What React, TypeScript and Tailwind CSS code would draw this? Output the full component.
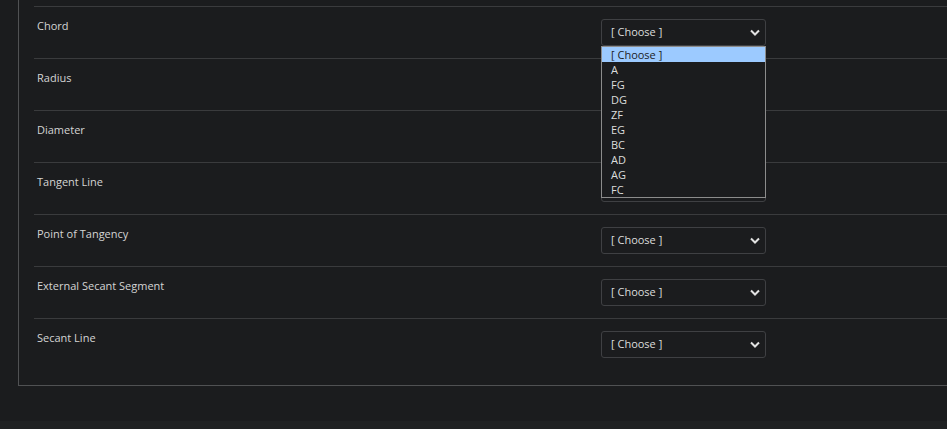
import React from "react";

const rows = [
  "Chord",
  "Radius",
  "Diameter",
  "Tangent Line",
  "Point of Tangency",
  "External Secant Segment",
  "Secant Line",
];

const options = ["[ Choose ]", "A", "FG", "DG", "ZF", "EG", "BC", "AD", "AG", "FC"];

function Chevron() {
  return (
    <svg width="10" height="7" viewBox="0 0 10 7" className="shrink-0">
      <path d="M1 1.5 L5 5.5 L9 1.5" fill="none" stroke="#e2e2e2" strokeWidth="2" />
    </svg>
  );
}

function Select({ open }: { open?: boolean }) {
  return (
    <div className="relative w-[165px]">
      <div className="flex h-[27px] items-center justify-between rounded-[3px] border border-[#3f4043] bg-[#1b1c1e] pl-[9px] pr-[5px] text-[11px] text-[#dcdcdc]">
        <span>[ Choose ]</span>
        <Chevron />
      </div>
      {open && (
        <div className="absolute left-0 top-[27px] z-10 w-[165px] border border-[#8c8c8c] bg-[#1b1c1e]">
          {options.map((o, i) => (
            <div
              key={o}
              className={
                i === 0
                  ? "h-[15px] overflow-hidden bg-[#9ccaff] pl-[9px] text-[11px] leading-[15px] text-[#1b1c1e]"
                  : "h-[15px] overflow-hidden pl-[9px] text-[11px] leading-[15px] text-[#dcdcdc]"
              }
            >
              {o}
            </div>
          ))}
        </div>
      )}
    </div>
  );
}

export default function App() {
  return (
    <div
      className="flex h-[429px] w-[947px] flex-col overflow-hidden bg-[#1b1c1e]"
      style={{ fontFamily: '"Open Sans", "DejaVu Sans", sans-serif' }}
    >
      <div className="ml-[18px] w-[1000px] border-b border-l border-[#505153] pb-[15px] pl-[15px] pt-[6px]">
        {rows.map((label, i) => (
          <div key={label} className="flex border-t border-[#3a3b3d] py-[12px]">
            <div className="w-[567px] pl-[3px] text-[11px] leading-[14px] text-[#d4d4d4]">
              {label}
            </div>
            <Select open={i === 0} />
          </div>
        ))}
      </div>
      <div className="flex-1" />
      <div className="h-[8px] bg-[#1f2122]" />
    </div>
  );
}
